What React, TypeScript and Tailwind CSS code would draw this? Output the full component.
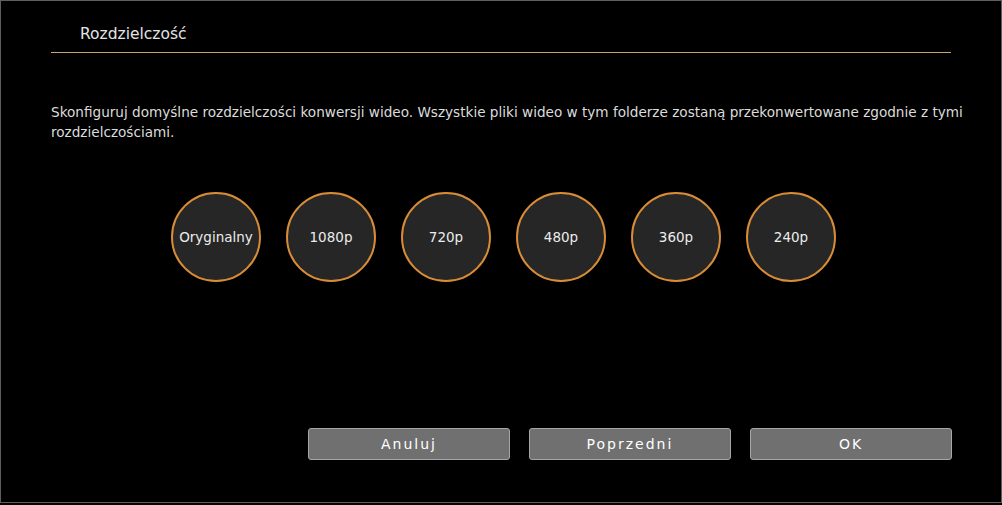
import React from "react";

const resolutions = ["Oryginalny", "1080p", "720p", "480p", "360p", "240p"];
const actions = ["Anuluj", "Poprzedni", "OK"];

export default function App() {
  return (
    <div
      className="w-[1002px] h-[505px] bg-black"
      style={{ fontFamily: '"DejaVu Sans", Verdana, sans-serif' }}
    >
      <div className="w-[1002px] h-[503px] border border-[#5e5e5e] bg-black flex flex-col">
        {/* header */}
        <div className="ml-[50px] mr-[50px] border-b border-[#c9a46e] h-[52px] pt-[21px]">
          <span className="ml-[29px] text-[15.5px] leading-[20px] text-[#e4e4e4]">Rozdzielczość</span>
        </div>

        <p className="ml-[50px] mr-[20px] mt-[49px] text-[13.6px] leading-[20px] text-[#dcdcdc]">
          Skonfiguruj domyślne rozdzielczości konwersji wideo. Wszystkie pliki wideo w tym folderze zostaną przekonwertowane zgodnie z tymi rozdzielczościami.
        </p>

        {/* resolution choices */}
        <div className="ml-[170px] mt-[50px] flex gap-[25px]">
          {resolutions.map((r) => (
            <button
              key={r}
              className="w-[90px] h-[90px] rounded-full bg-[#262626] border-2 border-[#d98c36] flex items-center justify-center text-[13.5px] text-[#ececec]"
            >
              {r}
            </button>
          ))}
        </div>

        {/* actions */}
        <div className="ml-[307px] mt-[146px] flex gap-[19px]">
          {actions.map((a) => (
            <button
              key={a}
              className="w-[202px] h-[32px] rounded-[3px] bg-[#707070] border border-[#a6a6a6] text-[14px] tracking-[2px] text-white flex items-center justify-center"
            >
              {a}
            </button>
          ))}
        </div>
      </div>
    </div>
  );
}
